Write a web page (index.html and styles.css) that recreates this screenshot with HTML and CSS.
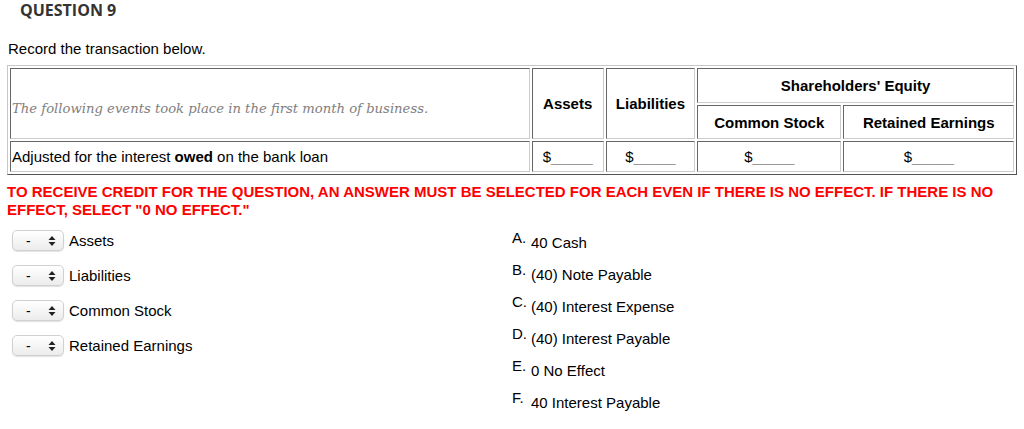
FILE: index.html
```html
<!DOCTYPE html>
<html>
<head>
<meta charset="utf-8">
<link rel="stylesheet" href="styles.css">
</head>
<body>
<div class="page">
  <h2 class="qtitle">QUESTION 9</h2>
  <p class="intro">Record the transaction below.</p>
  <table class="grid">
    <colgroup>
      <col class="c1"><col class="c2"><col class="c3"><col class="c4"><col class="c5">
    </colgroup>
    <tr class="r1">
      <td rowspan="2" class="events">The following events took place in the first month of business.</td>
      <th rowspan="2">Assets</th>
      <th rowspan="2">Liabilities</th>
      <th colspan="2">Shareholders' Equity</th>
    </tr>
    <tr class="r2">
      <th>Common Stock</th>
      <th>Retained Earnings</th>
    </tr>
    <tr class="r3">
      <td class="desc">Adjusted for the interest <b>owed</b> on the bank loan</td>
      <td class="amt">$<span class="blank">_____</span></td>
      <td class="amt">$<span class="blank">_____</span></td>
      <td class="amt">$<span class="blank">_____</span></td>
      <td class="amt">$<span class="blank">_____</span></td>
    </tr>
  </table>
  <p class="warn">TO RECEIVE CREDIT FOR THE QUESTION, AN ANSWER MUST BE SELECTED FOR EACH EVEN IF THERE IS NO EFFECT. IF THERE IS NO EFFECT, SELECT "0 NO EFFECT."</p>
  <div class="answers">
    <div class="selects">
      <div class="srow"><span class="sel"><span class="dash">-</span><svg class="arr" width="8" height="12" viewBox="0 0 8 12"><path d="M4 1 L7.5 5 L0.5 5 Z M4 11 L7.5 7 L0.5 7 Z" fill="#222"/></svg></span><span class="slabel">Assets</span></div>
      <div class="srow"><span class="sel"><span class="dash">-</span><svg class="arr" width="8" height="12" viewBox="0 0 8 12"><path d="M4 1 L7.5 5 L0.5 5 Z M4 11 L7.5 7 L0.5 7 Z" fill="#222"/></svg></span><span class="slabel">Liabilities</span></div>
      <div class="srow"><span class="sel"><span class="dash">-</span><svg class="arr" width="8" height="12" viewBox="0 0 8 12"><path d="M4 1 L7.5 5 L0.5 5 Z M4 11 L7.5 7 L0.5 7 Z" fill="#222"/></svg></span><span class="slabel">Common Stock</span></div>
      <div class="srow"><span class="sel"><span class="dash">-</span><svg class="arr" width="8" height="12" viewBox="0 0 8 12"><path d="M4 1 L7.5 5 L0.5 5 Z M4 11 L7.5 7 L0.5 7 Z" fill="#222"/></svg></span><span class="slabel">Retained Earnings</span></div>
    </div>
    <div class="options">
      <div class="opt"><span class="let">A.</span><span class="otext">40 Cash</span></div>
      <div class="opt"><span class="let">B.</span><span class="otext">(40) Note Payable</span></div>
      <div class="opt"><span class="let">C.</span><span class="otext">(40) Interest Expense</span></div>
      <div class="opt"><span class="let">D.</span><span class="otext">(40) Interest Payable</span></div>
      <div class="opt"><span class="let">E.</span><span class="otext">0 No Effect</span></div>
      <div class="opt"><span class="let">F.</span><span class="otext">40 Interest Payable</span></div>
    </div>
  </div>
</div>
</body>
</html>
```

FILE: styles.css
```css
html, body {
  margin: 0;
  padding: 0;
  background: #fff;
}
.page {
  padding: 0 0 0 7px;
  font-family: "Liberation Sans", Arial, sans-serif;
  font-size: 15px;
  color: #000;
}
.qtitle {
  margin: 0;
  padding: 0 0 0 13px;
  font-family: "Open Sans", sans-serif;
  font-weight: 700;
  font-size: 16px;
  line-height: 20px;
  color: #333;
}
.intro {
  margin: 19px 0 0 1px;
  line-height: 20px;
  font-size: 15px;
}
.grid {
  margin-top: 6px;
  width: 1010px;
  table-layout: fixed;
  border-collapse: separate;
  border-spacing: 2px;
  border: 1px solid;
  border-color: #c8c8c8 #555 #555 #c8c8c8;
}
.c1 { width: 518px; }
.c2 { width: 72px; }
.c3 { width: 89px; }
.c4 { width: 144px; }
.c5 { width: 170px; }
.grid td, .grid th {
  border: 1px solid;
  border-color: #666 #ccc #ccc #666;
  padding: 1px;
  font-size: 15px;
}
.grid th {
  font-weight: 700;
  text-align: center;
}
.r1 th, .r1 td { height: 31px; }
.r2 th { height: 30px; }
.r3 td { height: 27px; }
.grid .events {
  font-family: "DejaVu Serif", Georgia, serif;
  font-style: italic;
  font-size: 13.2px;
  color: #808080;
  text-align: left;
  padding-top: 10px;
}
.desc { text-align: left; }
.amt { text-align: center; }
.blank { color: #999; }
.warn {
  margin: 8px 0 0 0;
  color: #ff0000;
  font-weight: 700;
  font-size: 15px;
  line-height: 18px;
}
.answers {
  display: grid;
  grid-template-columns: 505px 1fr;
  margin-top: 7px;
}
.selects {
  display: flex;
  flex-direction: column;
  gap: 14px;
  padding: 4px 0 0 5px;
}
.srow {
  display: flex;
  align-items: center;
  gap: 5px;
  height: 21px;
}
.sel {
  display: flex;
  align-items: center;
  justify-content: space-between;
  box-sizing: border-box;
  width: 52px;
  height: 21px;
  padding: 0 7px 0 13px;
  border: 1px solid #d0d0d0;
  border-radius: 5px;
  background: linear-gradient(#ffffff, #ececec);
  box-shadow: 0 1px 1px rgba(0,0,0,0.12);
}
.dash { font-size: 14px; line-height: 1; }
.slabel { font-size: 15px; }
.options {
  display: flex;
  flex-direction: column;
  gap: 12px;
  padding-top: 5px;
}
.opt {
  display: flex;
  align-items: flex-start;
  height: 20px;
}
.let {
  width: 19px;
  font-size: 15px;
  line-height: 14px;
}
.otext {
  font-size: 15px;
  line-height: 20px;
  padding-top: 2px;
}
```
